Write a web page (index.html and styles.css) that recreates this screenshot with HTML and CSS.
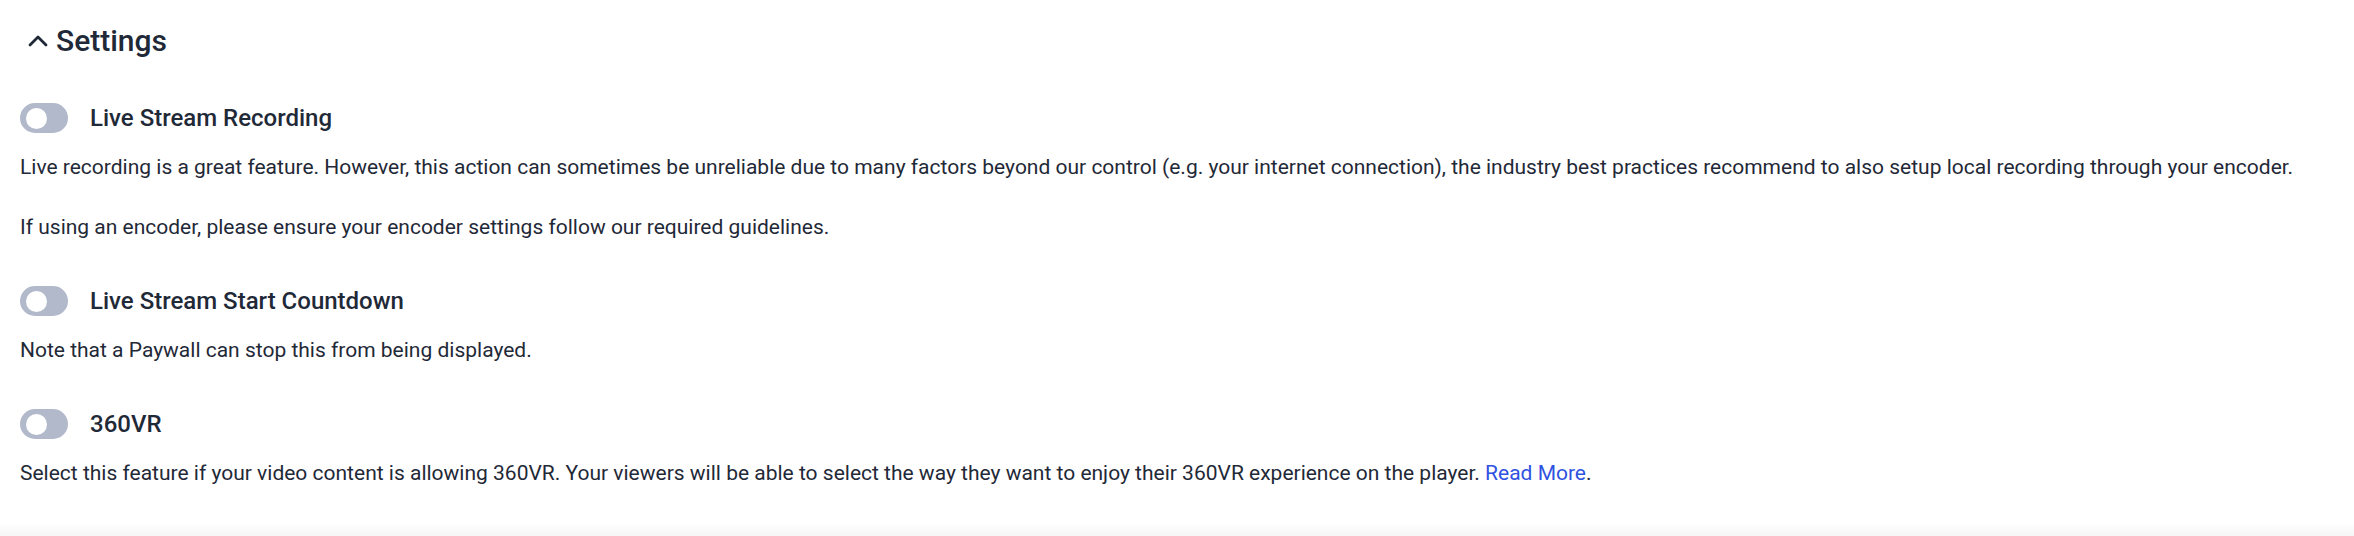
FILE: index.html
```html
<!DOCTYPE html>
<html>

<head>
    <meta charset="UTF-8">
    <title>Settings</title>
    <link rel="stylesheet" href="styles.css">
</head>
<body>
<div class="settings">
    <h2 class="settings-title">
        <svg class="chevron" width="20" height="14" viewBox="0 0 20 14">
            <polyline points="2,11 10,3 18,11" fill="none" stroke="#1f2937" stroke-width="2.8" stroke-linecap="round" stroke-linejoin="round"/>
        </svg>
        Settings
    </h2>

    <div class="setting">
        <div class="toggle-row">
            <span class="toggle"><span class="knob"></span></span>
            <span class="toggle-label">Live Stream Recording</span>
        </div>
        <p>Live recording is a great feature. However, this action can sometimes be unreliable due to many factors beyond our control (e.g. your internet connection), the industry best practices recommend to also setup local recording through your encoder.</p>
        <p>If using an encoder, please ensure your encoder settings follow our required guidelines.</p>
    </div>

    <div class="setting">
        <div class="toggle-row">
            <span class="toggle"><span class="knob"></span></span>
            <span class="toggle-label">Live Stream Start Countdown</span>
        </div>
        <p>Note that a Paywall can stop this from being displayed.</p>
    </div>

    <div class="setting">
        <div class="toggle-row">
            <span class="toggle"><span class="knob"></span></span>
            <span class="toggle-label">360VR</span>
        </div>
        <p>Select this feature if your video content is allowing 360VR. Your viewers will be able to select the way they want to enjoy their 360VR experience on the player. <a href="#">Read More</a>.</p>
    </div>
</div>
<div class="page-foot"></div>
<div class="chat-button"></div>
</body>
</html>
```

FILE: styles.css
```css
html, body {
    margin: 0;
    padding: 0;
    background: #fff;
    overflow: hidden;
}

body {
    font-family: Roboto, "Liberation Sans", sans-serif;
    color: #1f2937;
    position: relative;
    height: 536px;
}

.settings {
    padding: 23px 20px 0 20px;
    height: 502px;
    box-sizing: border-box;
}

.settings-title {
    display: flex;
    align-items: center;
    margin: 0 0 44px 0;
    font-size: 30px;
    line-height: 36px;
    font-weight: 500;
}

.chevron {
    margin-left: 8px;
    margin-right: 8px;
}

.setting {
    margin-bottom: 44px;
}

.toggle-row {
    display: flex;
    align-items: center;
    height: 30px;
    margin-bottom: 19px;
}

.toggle {
    display: inline-flex;
    align-items: center;
    width: 48px;
    height: 30px;
    border-radius: 15px;
    background: #b1b9ca;
    box-sizing: border-box;
    padding-left: 6px;
}

.knob {
    width: 21px;
    height: 21px;
    border-radius: 50%;
    background: #fff;
}

.toggle-label {
    margin-left: 22px;
    font-size: 24px;
    line-height: 30px;
    font-weight: 500;
}

.setting p {
    margin: 0 0 30px 0;
    font-size: 21px;
    line-height: 30px;
}

.setting p:last-child {
    margin-bottom: 0;
}

.setting a {
    color: #2f52e0;
    text-decoration: none;
}

.page-foot {
    height: 11px;
    margin-top: 23px;
    background: linear-gradient(#fdfdfd, #f6f6f6);
}

.chat-button {
    position: absolute;
    right: 0;
    bottom: 0;
    width: 8px;
    height: 12px;
    background: radial-gradient(circle 34px at 36px 36px, #4a5be0 98%, transparent 100%);
}
```
